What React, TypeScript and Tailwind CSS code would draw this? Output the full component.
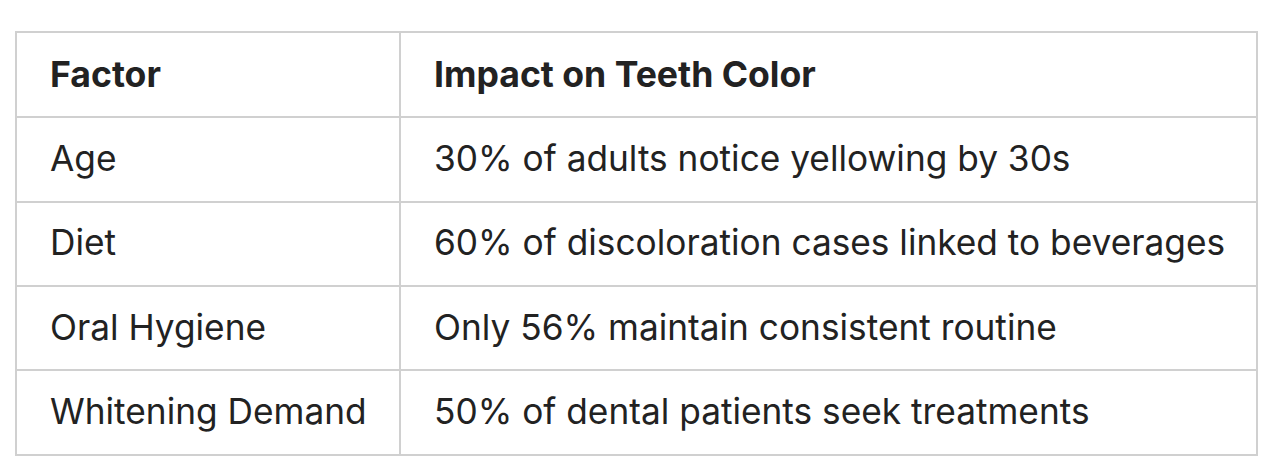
import React from "react";

const rows = [
  ["Age", "30% of adults notice yellowing by 30s"],
  ["Diet", "60% of discoloration cases linked to beverages"],
  ["Oral Hygiene", "Only 56% maintain consistent routine"],
  ["Whitening Demand", "50% of dental patients seek treatments"],
];

const App = () => {
  return (
    <div className="min-h-[473px] bg-white px-[15px] pt-[31px] font-['Inter',sans-serif] text-[#222222]">
      <div className="border-2 border-[#d0d0d0]">
        <div className="grid h-[83.4px] grid-cols-[384px_1fr] text-[35.6px] font-bold">
          <div className="flex items-center border-r-2 border-[#d0d0d0] pl-[33px]">Factor</div>
          <div className="flex items-center pl-[33px]">Impact on Teeth Color</div>
        </div>
        {rows.map(([factor, impact]) => (
          <div
            key={factor}
            className="grid h-[84.3px] grid-cols-[384px_1fr] border-t-2 border-[#d0d0d0] text-[35.25px]"
          >
            <div className="flex items-center border-r-2 border-[#d0d0d0] pl-[33px]">{factor}</div>
            <div className="flex items-center pl-[33px]">{impact}</div>
          </div>
        ))}
      </div>
    </div>
  );
};

export default App;
